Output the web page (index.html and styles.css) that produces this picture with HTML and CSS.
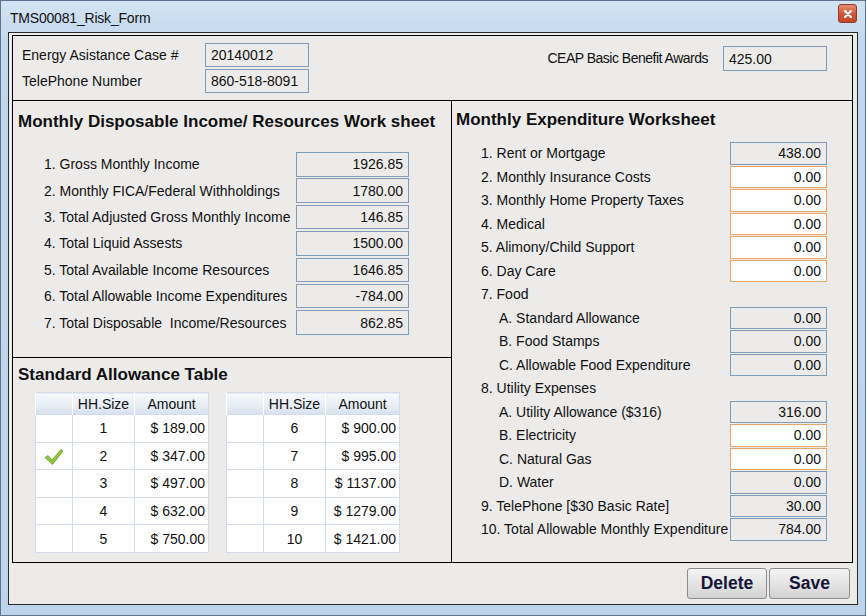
FILE: index.html
```html
<!DOCTYPE html>
<html>
<head>
<meta charset="utf-8">
<title>TMS00081_Risk_Form</title>
<link rel="stylesheet" href="styles.css">
</head>
<body>
<div class="window">
  <div class="titlebar">
    <span class="title">TMS00081_Risk_Form</span>
    <span class="close"><svg width="10" height="10" viewBox="0 0 10 10"><path d="M2 2 L8 8 M8 2 L2 8" stroke="#fff" stroke-width="2.2" stroke-linecap="round"/></svg></span>
  </div>
  <div class="client">
    <div class="form">
      <div class="top">
        <div class="top-left">
          <div class="tfield"><span class="tlabel">Energy Asistance Case #</span><span class="box blue left">20140012</span></div>
          <div class="tfield"><span class="tlabel">TelePhone Number</span><span class="box blue left">860-518-8091</span></div>
        </div>
        <div class="top-right">
          <span class="clabel">CEAP Basic Benefit Awards</span><span class="box blue left ceap">425.00</span>
        </div>
      </div>
      <div class="middle">
        <div class="left-col">
          <section class="income">
            <h2 class="heading">Monthly Disposable Income/ Resources Work sheet</h2>
            <div class="rows income-rows">
              <span class="lbl">1. Gross Monthly Income</span><span class="box blue">1926.85</span>
              <span class="lbl">2. Monthly FICA/Federal Withholdings</span><span class="box blue">1780.00</span>
              <span class="lbl">3. Total Adjusted Gross Monthly Income</span><span class="box blue">146.85</span>
              <span class="lbl">4. Total Liquid Assests</span><span class="box blue">1500.00</span>
              <span class="lbl">5. Total Available Income Resources</span><span class="box blue">1646.85</span>
              <span class="lbl">6. Total Allowable Income Expenditures</span><span class="box blue">-784.00</span>
              <span class="lbl">7. Total Disposable&nbsp; Income/Resources</span><span class="box blue">862.85</span>
            </div>
          </section>
          <section class="allowance">
            <h2 class="heading">Standard Allowance Table</h2>
            <div class="tables">
              <table class="grid">
                <thead><tr><th></th><th>HH.Size</th><th>Amount</th></tr></thead>
                <tbody>
                  <tr><td></td><td class="c">1</td><td class="r">$ 189.00</td></tr>
                  <tr><td class="chk"><svg width="20" height="18" viewBox="0 0 20 18"><path d="M1 9.5 L4 7.5 L8 12 L17 1.5 L19 3 L8.5 16.5 Z" fill="#8cc43c" stroke="#6f9e2a" stroke-width="0.8" stroke-linejoin="round"/></svg></td><td class="c">2</td><td class="r">$ 347.00</td></tr>
                  <tr><td></td><td class="c">3</td><td class="r">$ 497.00</td></tr>
                  <tr><td></td><td class="c">4</td><td class="r">$ 632.00</td></tr>
                  <tr><td></td><td class="c">5</td><td class="r">$ 750.00</td></tr>
                </tbody>
              </table>
              <table class="grid">
                <thead><tr><th></th><th>HH.Size</th><th>Amount</th></tr></thead>
                <tbody>
                  <tr><td></td><td class="c">6</td><td class="r">$ 900.00</td></tr>
                  <tr><td></td><td class="c">7</td><td class="r">$ 995.00</td></tr>
                  <tr><td></td><td class="c">8</td><td class="r">$ 1137.00</td></tr>
                  <tr><td></td><td class="c">9</td><td class="r">$ 1279.00</td></tr>
                  <tr><td></td><td class="c">10</td><td class="r">$ 1421.00</td></tr>
                </tbody>
              </table>
            </div>
          </section>
        </div>
        <section class="expenditure">
          <h2 class="heading">Monthly Expenditure Worksheet</h2>
          <div class="rows exp-rows">
            <span class="lbl">1. Rent or Mortgage</span><span class="box blue">438.00</span>
            <span class="lbl">2. Monthly Insurance Costs</span><span class="box orange">0.00</span>
            <span class="lbl">3. Monthly Home Property Taxes</span><span class="box orange">0.00</span>
            <span class="lbl">4. Medical</span><span class="box orange">0.00</span>
            <span class="lbl">5. Alimony/Child Support</span><span class="box orange">0.00</span>
            <span class="lbl">6. Day Care</span><span class="box orange">0.00</span>
            <span class="lbl">7. Food</span><span></span>
            <span class="lbl sub">A. Standard Allowance</span><span class="box blue">0.00</span>
            <span class="lbl sub">B. Food Stamps</span><span class="box blue">0.00</span>
            <span class="lbl sub">C. Allowable Food Expenditure</span><span class="box blue">0.00</span>
            <span class="lbl">8. Utility Expenses</span><span></span>
            <span class="lbl sub">A. Utility Allowance ($316)</span><span class="box blue">316.00</span>
            <span class="lbl sub">B. Electricity</span><span class="box orange">0.00</span>
            <span class="lbl sub">C. Natural Gas</span><span class="box orange">0.00</span>
            <span class="lbl sub">D. Water</span><span class="box blue">0.00</span>
            <span class="lbl">9. TelePhone [$30 Basic Rate]</span><span class="box blue">30.00</span>
            <span class="lbl">10. Total Allowable Monthly Expenditure</span><span class="box blue">784.00</span>
          </div>
        </section>
      </div>
    </div>
    <div class="buttons">
      <button class="btn">Delete</button>
      <button class="btn">Save</button>
    </div>
  </div>
</div>
</body>
</html>
```

FILE: styles.css
```css
* { box-sizing: border-box; }
html, body { margin: 0; padding: 0; }
body {
  width: 866px;
  height: 616px;
  overflow: hidden;
  font-family: "Liberation Sans", Arial, sans-serif;
  font-size: 14px;
  color: #111;
}
.window {
  width: 866px;
  height: 616px;
  background: linear-gradient(180deg, #d3e3f3 0%, #c3d8ed 40px, #bed4ea 100%);
  border: 1px solid #5d7590;
  display: flex;
  flex-direction: column;
}
.titlebar {
  height: 31px;
  display: flex;
  align-items: center;
  justify-content: space-between;
  padding: 0 8px 0 9px;
}
.title {
  font-size: 14px;
  letter-spacing: -0.2px;
  color: #111;
  margin-top: 2px;
}
.close {
  width: 19px;
  height: 19px;
  margin-top: -6px;
  border: 1px solid #8e3b28;
  border-radius: 3px;
  background: linear-gradient(180deg, #e88c72 0%, #d4573b 50%, #c2452a 100%);
  display: flex;
  align-items: center;
  justify-content: center;
}
.client {
  margin: 0 7px 0 7px;
  height: 573px;
  border: 1px solid #2a2a2a;
  background: #ecebea;
  padding: 2px 4px 0 3px;
  display: flex;
  flex-direction: column;
}
.form {
  border: 1px solid #000;
  height: 528px;
  display: flex;
  flex-direction: column;
}
.top {
  height: 65px;
  border-bottom: 1px solid #000;
  display: flex;
  justify-content: space-between;
}
.top-left {
  padding: 7px 0 0 9px;
  display: flex;
  flex-direction: column;
  gap: 2px;
}
.tfield {
  display: flex;
  align-items: center;
}
.tlabel {
  width: 183px;
}
.box {
  display: flex;
  align-items: center;
  justify-content: flex-end;
  padding: 0 5px;
  border: 1px solid #7f9db9;
  font-size: 14px;
  color: #111;
}
.box.left { justify-content: flex-start; }
.top-left .box {
  width: 104px;
  height: 24px;
}
.top-right {
  padding: 10px 25px 0 0;
  display: flex;
  align-items: flex-start;
}
.clabel {
  height: 25px;
  line-height: 25px;
  margin-right: 15px;
  letter-spacing: -0.5px;
}
.box.ceap {
  width: 104px;
  height: 25px;
}
.box.blue { border-color: #7f9db9; background: transparent; }
.box.orange { border-color: #eaa668; background: #fff; }

.middle {
  flex: 1;
  display: flex;
}
.left-col {
  width: 439px;
  border-right: 1px solid #000;
  display: flex;
  flex-direction: column;
}
.heading {
  margin: 0;
  font-size: 17px;
  font-weight: bold;
  line-height: 20px;
  color: #111;
}
.income {
  height: 257px;
  border-bottom: 1px solid #000;
  padding: 11px 0 0 5px;
}
.rows {
  display: grid;
  align-items: stretch;
}
.lbl {
  display: flex;
  align-items: center;
  white-space: nowrap;
}
.income-rows {
  margin-top: 20px;
  padding-left: 26px;
  grid-template-columns: 252px 113px;
  grid-auto-rows: 24.5px;
  row-gap: 1.9px;
}
.allowance {
  flex: 1;
  padding: 7px 0 0 5px;
}
.tables {
  margin-top: 7px;
  padding-left: 17px;
  display: flex;
  gap: 17px;
}
.grid {
  border-collapse: collapse;
  width: 174px;
  background: #fff;
  border: 1px solid #d3dce8;
  font-size: 14px;
  color: #111;
}
.grid th {
  height: 22px;
  font-weight: normal;
  background: linear-gradient(180deg, #f7f9fc 0%, #e6edf5 60%, #d6e0ec 100%);
  border-left: 1px solid #fff;
  padding: 0;
  text-align: center;
}
.grid th:nth-child(1), .grid td:nth-child(1) { width: 37px; }
.grid th:nth-child(2), .grid td:nth-child(2) { width: 62px; }
.grid td {
  height: 27.6px;
  border: 1px solid #d3dce8;
  padding: 0 3px 0 0;
}
.grid td.c { text-align: center; padding: 0; }
.grid td.r { text-align: right; }
.grid td.chk { text-align: center; padding: 2px 0 0 0; }
.grid td.chk svg { display: block; margin: 0 auto; }

.expenditure {
  flex: 1;
  padding: 9px 0 0 4px;
}
.exp-rows {
  margin-top: 12px;
  padding-left: 25px;
  grid-template-columns: 249px 97px;
  grid-auto-rows: 22.5px;
  row-gap: 1px;
}
.lbl.sub { padding-left: 18px; }

.buttons {
  display: flex;
  justify-content: flex-end;
  gap: 2px;
  padding: 5px 3px 0 0;
}
.btn {
  height: 31px;
  border: 1px solid #8d8d8d;
  border-radius: 3px;
  background: linear-gradient(180deg, #f4f4f4 0%, #e4e4e4 50%, #d2d2d2 100%);
  font-family: "Liberation Sans", Arial, sans-serif;
  font-weight: bold;
  font-size: 17.5px;
  color: #15153a;
  padding: 0;
}
.btn:first-child { width: 80px; }
.btn:last-child { width: 81px; }
```
